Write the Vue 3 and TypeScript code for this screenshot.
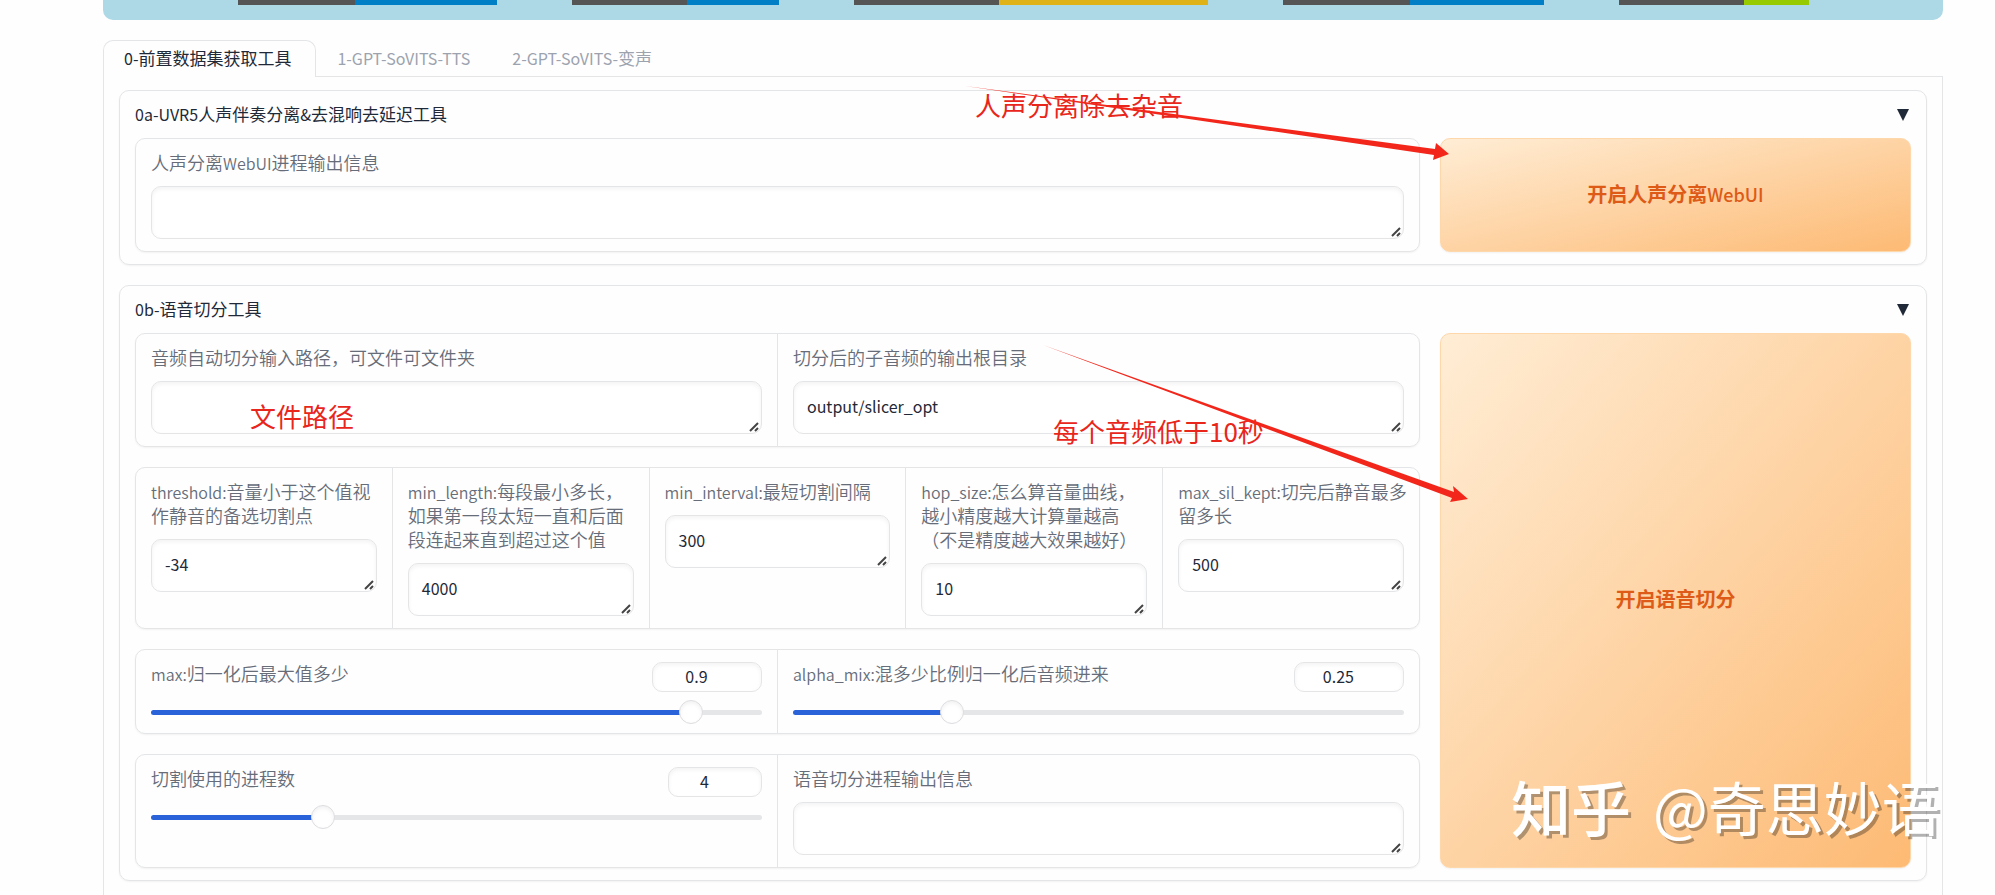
<script setup lang="ts">
import { h, reactive, ref } from 'vue'

interface Badge { label: number; value: number; color: string }
interface Field { id: string; label: string; value: string }
interface Slider { id: string; label: string; value: number; min: number; max: number; step: number; narrow?: boolean }

const badges: Badge[] = [
  { label: 117, value: 142, color: '#007ec6' },
  { label: 115, value: 92, color: '#007ec6' },
  { label: 145, value: 209, color: '#dfb317' },
  { label: 127, value: 134, color: '#007ec6' },
  { label: 125, value: 65, color: '#97ca00' },
]

const tabs: string[] = ['0-前置数据集获取工具', '1-GPT-SoVITS-TTS', '2-GPT-SoVITS-变声']
const active = ref(0)
const openUvr = ref(true)
const openSlice = ref(true)

const uvrInfo = ref('')
const sliceInfo = ref('')

const paths = reactive<Field[]>([
  { id: 'slice-in', label: '音频自动切分输入路径，可文件可文件夹', value: '' },
  { id: 'slice-out', label: '切分后的子音频的输出根目录', value: 'output/slicer_opt' },
])

const params = reactive<Field[]>([
  { id: 'threshold', label: 'threshold:音量小于这个值视作静音的备选切割点', value: '-34' },
  { id: 'min-length', label: 'min_length:每段最小多长，如果第一段太短一直和后面段连起来直到超过这个值', value: '4000' },
  { id: 'min-interval', label: 'min_interval:最短切割间隔', value: '300' },
  { id: 'hop-size', label: 'hop_size:怎么算音量曲线，越小精度越大计算量越高（不是精度越大效果越好）', value: '10' },
  { id: 'max-sil', label: 'max_sil_kept:切完后静音最多留多长', value: '500' },
])

const mixSliders = reactive<Slider[]>([
  { id: 'max', label: 'max:归一化后最大值多少', value: 0.9, min: 0, max: 1, step: 0.05 },
  { id: 'alpha', label: 'alpha_mix:混多少比例归一化后音频进来', value: 0.25, min: 0, max: 1, step: 0.05 },
])
const procSliders = reactive<Slider[]>([
  { id: 'procs', label: '切割使用的进程数', value: 4, min: 1, max: 12, step: 1, narrow: true },
])

// Latin runs are set a little smaller than the Chinese around them.
const Mixed = (props: { text: string }) =>
  h(
    'span',
    (props.text.match(/[\x20-\x7e]+|[^\x20-\x7e]+/g) ?? []).map((run) =>
      run.charCodeAt(0) < 128 ? h('span', { class: 'latin' }, run) : run,
    ),
  )
Mixed.props = ['text']

function fill(s: Slider): string {
  return `${((s.value - s.min) / (s.max - s.min)) * 100}%`
}
</script>

<template>
  <main class="app">
    <header class="banner">
      <span v-for="(b, i) in badges" :key="i" class="badge">
        <span class="badge-part" :style="{ width: b.label + 'px' }"></span>
        <span class="badge-part" :style="{ width: b.value + 'px', background: b.color }"></span>
      </span>
    </header>

    <nav class="tabs" role="tablist">
      <button
        v-for="(t, i) in tabs"
        :key="t"
        type="button"
        role="tab"
        class="tab"
        :class="{ selected: active === i }"
        :aria-selected="active === i"
        @click="active = i"
      ><Mixed :text="t" /></button>
    </nav>

    <div class="panel" role="tabpanel">
      <section class="accordion">
        <button type="button" class="accordion-head" :aria-expanded="openUvr" @click="openUvr = !openUvr">
          <Mixed text="0a-UVR5人声伴奏分离&amp;去混响去延迟工具" />
          <svg class="caret" viewBox="0 0 12 12" aria-hidden="true"><path d="M0 0H12L6 12Z" /></svg>
        </button>
        <div v-if="openUvr" class="split">
          <div class="form">
            <div class="cell">
              <label class="label" for="uvr-info"><Mixed text="人声分离WebUI进程输出信息" /></label>
              <textarea id="uvr-info" v-model="uvrInfo" class="box" rows="1"></textarea>
            </div>
          </div>
          <button type="button" class="primary"><Mixed text="开启人声分离WebUI" /></button>
        </div>
      </section>

      <section class="accordion">
        <button type="button" class="accordion-head" :aria-expanded="openSlice" @click="openSlice = !openSlice">
          <Mixed text="0b-语音切分工具" />
          <svg class="caret" viewBox="0 0 12 12" aria-hidden="true"><path d="M0 0H12L6 12Z" /></svg>
        </button>
        <div v-if="openSlice" class="split">
          <div class="rows">
            <div class="form">
              <div v-for="f in paths" :key="f.id" class="cell">
                <label class="label" :for="f.id">{{ f.label }}</label>
                <textarea :id="f.id" v-model="f.value" class="box" rows="1"></textarea>
              </div>
            </div>

            <div class="form">
              <div v-for="f in params" :key="f.id" class="cell">
                <label class="label" :for="f.id"><Mixed :text="f.label" /></label>
                <textarea :id="f.id" v-model="f.value" class="box" rows="1"></textarea>
              </div>
            </div>

            <div class="form">
              <div v-for="s in mixSliders" :key="s.id" class="cell">
                <div class="slider-head">
                  <label class="label" :for="s.id"><Mixed :text="s.label" /></label>
                  <input v-model.number="s.value" class="number" type="number" :min="s.min" :max="s.max" :step="s.step" :aria-label="s.label" />
                </div>
                <input :id="s.id" v-model.number="s.value" class="range" type="range" :min="s.min" :max="s.max" :step="s.step" :style="{ '--fill': fill(s) }" />
              </div>
            </div>

            <div class="form">
              <div v-for="s in procSliders" :key="s.id" class="cell">
                <div class="slider-head">
                  <label class="label" :for="s.id">{{ s.label }}</label>
                  <input v-model.number="s.value" class="number narrow" type="number" :min="s.min" :max="s.max" :step="s.step" :aria-label="s.label" />
                </div>
                <input :id="s.id" v-model.number="s.value" class="range" type="range" :min="s.min" :max="s.max" :step="s.step" :style="{ '--fill': fill(s) }" />
              </div>
              <div class="cell">
                <label class="label" for="slice-info">语音切分进程输出信息</label>
                <textarea id="slice-info" v-model="sliceInfo" class="box" rows="1"></textarea>
              </div>
            </div>
          </div>
          <button type="button" class="primary">开启语音切分</button>
        </div>
      </section>
    </div>

    <div class="notes">
      <span class="note note-noise">人声分离除去杂音</span>
      <span class="note note-path">文件路径</span>
      <span class="note note-length">每个音频低于10秒</span>
      <svg class="arrows" width="1995" height="895" viewBox="0 0 1995 895" aria-hidden="true">
        <path d="M965 86L1435 149L1436 143L1449 154L1433 160L1434 155Z" />
        <path d="M1043 345L1454 492L1453 486L1468 499L1450 502L1452 498Z" />
      </svg>
      <span class="watermark"><span class="brand">知乎</span><span>@奇思妙语</span></span>
    </div>
  </main>
</template>

<style>
html,
body {
  background: #fefefe;
}
body {
  margin: 0;
  height: 100vh;
  overflow: hidden;
}
</style>

<style scoped>
.app {
  --line: #e4e5e7;
  position: relative;
  box-sizing: border-box;
  min-height: 100vh;
  padding: 0 52px 0 103px;
  display: flex;
  flex-direction: column;
  font-family: 'Noto Sans CJK SC', 'Noto Sans', sans-serif;
  font-size: 17px;
  line-height: 24px;
  color: #1f2937;
}
.app * {
  box-sizing: border-box;
}
button,
input,
textarea {
  font: inherit;
  color: inherit;
  margin: 0;
}
button {
  cursor: pointer;
}
.app :deep(.latin) {
  font-size: 16px;
  line-height: 16px;
}

.banner {
  height: 20px;
  display: flex;
  justify-content: center;
  align-items: flex-start;
  gap: 75px;
  background: #add8e6;
  border-radius: 0 0 10px 10px;
}
.badge {
  display: flex;
  height: 5px;
}
.badge-part {
  background: #555;
}

.tabs {
  display: flex;
  margin-top: 20px;
  height: 37px;
  border-bottom: 1px solid var(--line);
}
.tab {
  height: 37px;
  padding: 0 20px 2px;
  border: 1px solid transparent;
  border-bottom: 0;
  border-radius: 10px 10px 0 0;
  background: transparent;
  color: #9ca3af;
  white-space: nowrap;
}
.tab.selected {
  padding-right: 24px;
  background: #fefefe;
  border-color: var(--line);
  color: #1f2937;
}

.panel {
  flex: 1;
  display: flex;
  flex-direction: column;
  gap: 20px;
  padding: 13px 15px;
  border: 1px solid var(--line);
  border-width: 0 1px;
}
.accordion {
  padding: 11px 15px 12px;
  border: 1px solid var(--line);
  border-radius: 10px;
  box-shadow: 0 1px 2px rgba(0, 0, 0, 0.05);
}
.accordion-head {
  width: 100%;
  height: 24px;
  padding: 0;
  border: 0;
  background: none;
  display: flex;
  justify-content: space-between;
  align-items: center;
}
.caret {
  width: 12px;
  height: 12px;
  margin: 2px 2px 0 0;
  fill: #1f2937;
}
.split {
  margin-top: 12px;
  display: grid;
  grid-template-columns: minmax(0, 30fr) minmax(0, 11fr);
  gap: 20px;
}
.rows {
  display: flex;
  flex-direction: column;
  gap: 20px;
}
.form {
  display: flex;
  border: 1px solid var(--line);
  border-radius: 10px;
  box-shadow: 0 1px 2px rgba(0, 0, 0, 0.05);
}
.cell {
  flex: 1 1 0;
  min-width: 0;
  padding: 11px 15px 12px;
}
.cell + .cell {
  border-left: 1px solid var(--line);
}
.label {
  display: block;
  margin: 0 -4px 12px 0;
  color: #666d79;
  font-size: 18px;
  font-weight: 350;
}
.box {
  display: block;
  width: 100%;
  height: 53px;
  padding: 12px 13px;
  border: 1px solid var(--line);
  border-radius: 10px;
  background: #fff;
  box-shadow: inset 0 2px 4px rgba(0, 0, 0, 0.05);
  font-size: 16px;
  line-height: 25px;
  outline: none;
  resize: vertical;
  overflow: hidden;
}
.box::-webkit-resizer {
  background: url("data:image/svg+xml,%3Csvg xmlns='http://www.w3.org/2000/svg' width='15' height='15'%3E%3Cpath d='M4 13L12 5M9 13L12 10' stroke='%23444' stroke-width='2' fill='none'/%3E%3C/svg%3E") right bottom no-repeat;
}
.slider-head {
  display: flex;
  justify-content: space-between;
  align-items: flex-start;
}
.slider-head .label {
  margin: 0;
}
.number {
  width: 110px;
  height: 30px;
  margin-top: 1px;
  padding: 0 16px 2px 10px;
  border: 1px solid var(--line);
  border-radius: 10px;
  background: #fff;
  box-shadow: inset 0 2px 4px rgba(0, 0, 0, 0.05);
  font-size: 16px;
  text-align: center;
  outline: none;
}
.number.narrow {
  width: 94px;
}
.range {
  -webkit-appearance: none;
  appearance: none;
  display: block;
  width: 100%;
  height: 18px;
  margin: 11px 0 0;
  background: none;
}
.range::-webkit-slider-runnable-track {
  height: 5px;
  border-radius: 3px;
  background: linear-gradient(#2962d9, #2962d9) 0 0 / var(--fill) 100% no-repeat #e5e6e8;
}
.range::-webkit-slider-thumb {
  -webkit-appearance: none;
  width: 24px;
  height: 24px;
  margin-top: -10px;
  border: 1px solid #dcdde0;
  border-radius: 50%;
  background: #fff;
  box-shadow: inset 0 2px 4px rgba(0, 0, 0, 0.06);
}

.primary {
  padding: 0 0 3px;
  border: 1px solid #fed7aa;
  border-radius: 10px;
  background: linear-gradient(to bottom right, #ffedd5, #fdba74);
  color: #dd5a17;
  font-size: 20px;
  font-weight: 700;
  box-shadow: 0 1px 2px rgba(0, 0, 0, 0.05);
}
.primary :deep(.latin) {
  font-size: 18px;
  font-weight: 500;
}

.notes {
  position: absolute;
  inset: 0;
  overflow: hidden;
  pointer-events: none;
}
.note,
.watermark {
  position: absolute;
  white-space: nowrap;
}
.note {
  color: #e8261b;
  font-size: 26px;
  line-height: 36px;
}
.note-noise {
  left: 975px;
  top: 87px;
}
.note-path {
  left: 250px;
  top: 398px;
}
.note-length {
  left: 1053px;
  top: 413px;
}
.arrows {
  position: absolute;
  left: 0;
  top: 0;
  fill: #f2261a;
}
.watermark {
  left: 1511px;
  top: 766px;
  display: flex;
  gap: 22px;
  color: #fff;
  font-size: 58px;
  font-weight: 400;
  line-height: 80px;
  text-shadow: 3px 3px 0 rgba(0, 0, 0, 0.3);
}
.brand {
  font-size: 60px;
  font-weight: 500;
}
</style>
